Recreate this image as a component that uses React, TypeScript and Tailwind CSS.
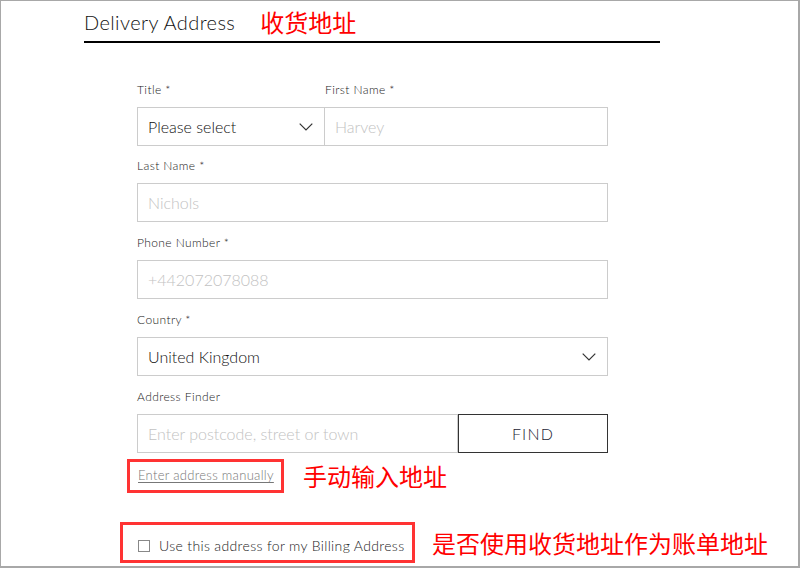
import React from "react";

const Chevron = () => (
  <svg width="14" height="8" viewBox="0 0 14 8" fill="none">
    <path d="M0.7 0.7 L7 7 L13.3 0.7" stroke="#333" strokeWidth="1.2" />
  </svg>
);

const Label = ({ children }: { children: React.ReactNode }) => (
  <div className="h-[18px] text-[12px] leading-[18px] text-[#1a1a1a] tracking-[0.4px] mt-[1px] -mb-[1px]">{children}</div>
);

const Input = ({ placeholder, className = "" }: { placeholder: string; className?: string }) => (
  <div className={"h-[39px] border border-[#cccccc] flex items-center pl-[10px] text-[16px] text-[#c2c2c2] " + className}>
    {placeholder}
  </div>
);

export default function App() {
  const cjk = { fontFamily: '"Noto Sans CJK SC", "Microsoft YaHei", sans-serif' };
  return (
    <div
      className="w-[800px] h-[568px] bg-white border-t border-l border-r-2 border-b-2 border-[#a8a8a8] overflow-hidden font-light"
      style={{ fontFamily: 'Lato, "Noto Sans", sans-serif' }}
    >
      <div className="pl-[83px] pt-[8px]">
        <div className="w-[576px] h-[34px] border-b-2 border-black flex items-start">
          <span className="text-[20px] leading-[28px] text-[#111] tracking-[0.4px] -mt-[1px]">Delivery Address</span>
          <span className="ml-[25px] text-[24px] leading-[34px] text-[#ff0000] -mt-[4px] font-normal" style={cjk}>收货地址</span>
        </div>
      </div>

      <div className="ml-[136px] w-[471px] mt-[37px] flex flex-col">
        <div className="flex">
          <div className="w-[188px] flex flex-col">
            <Label>Title *</Label>
            <div className="mt-[9px] h-[39px] border border-[#cccccc] flex items-center justify-between pl-[10px] pr-[11px] text-[16px] text-[#111]">
              <span>Please select</span>
              <Chevron />
            </div>
          </div>
          <div className="flex-1 flex flex-col">
            <Label>First Name *</Label>
            <Input placeholder="Harvey" className="mt-[9px] border-l-0" />
          </div>
        </div>

        <div className="mt-[10px]">
          <Label>Last Name *</Label>
          <Input placeholder="Nichols" className="mt-[9px]" />
        </div>

        <div className="mt-[11px]">
          <Label>Phone Number *</Label>
          <Input placeholder="+442072078088" className="mt-[9px]" />
        </div>

        <div className="mt-[11px]">
          <Label>Country *</Label>
          <div className="mt-[9px] h-[39px] border border-[#cccccc] flex items-center justify-between pl-[10px] pr-[11px] text-[16px] text-[#111]">
            <span>United Kingdom</span>
            <Chevron />
          </div>
        </div>

        <div className="mt-[11px]">
          <Label>Address Finder</Label>
          <div className="mt-[9px] flex">
            <Input placeholder="Enter postcode, street or town" className="flex-1" />
            <div className="w-[150px] h-[39px] border border-[#333] flex items-center justify-center text-[16px] tracking-[1.2px] text-[#1b1b33]">
              FIND
            </div>
          </div>
        </div>
      </div>

      <div className="flex items-center mt-[6px] ml-[126px]">
        <div className="w-[157px] h-[34px] border-[3px] border-[#ff3333] flex items-center pl-[8px]">
          <span className="text-[13px] text-[#777] underline underline-offset-2 tracking-[0.3px]">Enter address manually</span>
        </div>
        <span className="ml-[19px] text-[24px] text-[#ff0000] leading-[34px] font-normal" style={cjk}>手动输入地址</span>
      </div>

      <div className="flex items-center mt-[29px] ml-[119px]">
        <div className="w-[295px] h-[41px] border-[3px] border-[#ff3333] flex items-center pl-[15px] pt-[6px]">
          <div className="w-[12px] h-[12px] border border-[#888] mr-[9px]" />
          <span className="text-[14px] text-[#1a1a1a] tracking-[0.35px]">Use this address for my Billing Address</span>
        </div>
        <span className="ml-[17px] text-[24px] text-[#ff0000] leading-[34px] font-normal" style={cjk}>是否使用收货地址作为账单地址</span>
      </div>
    </div>
  );
}
